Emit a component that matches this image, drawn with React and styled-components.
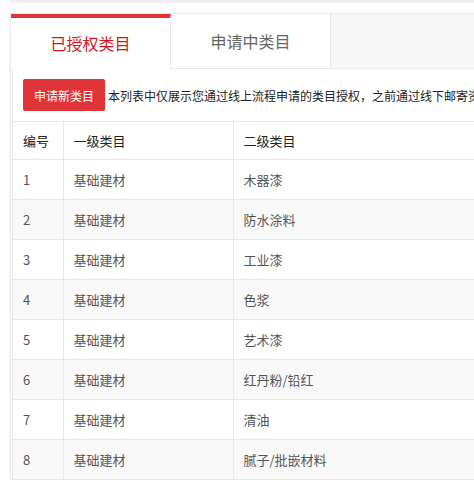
import React, { useState } from "react";
import styled, { createGlobalStyle } from "styled-components";

const GlobalStyle = createGlobalStyle`
  html, body {
    margin: 0;
    padding: 0;
    background: #fff;
    overflow: hidden;
    font-family: "Noto Sans CJK SC", "Liberation Sans", sans-serif;
  }
`;

const rows = [
  ["1", "基础建材", "木器漆"],
  ["2", "基础建材", "防水涂料"],
  ["3", "基础建材", "工业漆"],
  ["4", "基础建材", "色浆"],
  ["5", "基础建材", "艺术漆"],
  ["6", "基础建材", "红丹粉/铅红"],
  ["7", "基础建材", "清油"],
  ["8", "基础建材", "腻子/批嵌材料"],
];

function App() {
  const [tab, settab] = useState(0);
  return (
    <>
      <GlobalStyle />
      <Page>
        <TopStrip />
        <Box>
          <TabBar>
            <Tab active={tab === 0} onClick={() => settab(0)}>
              已授权类目
            </Tab>
            <Tab active={tab === 1} onClick={() => settab(1)}>
              申请中类目
            </Tab>
          </TabBar>
          <Panel>
            <Toolbar>
              <Button>申请新类目</Button>
              <Notice>
                本列表中仅展示您通过线上流程申请的类目授权，之前通过线下邮寄资质获得的类目授权不在此列表中展示
              </Notice>
            </Toolbar>
            <Table>
              <thead>
                <tr>
                  <Th width="50px">编号</Th>
                  <Th width="170px">一级类目</Th>
                  <Th width="400px">二级类目</Th>
                </tr>
              </thead>
              <tbody>
                {rows.map((row, i) => (
                  <Tr key={row[0]} striped={i % 2 === 1}>
                    <Td>{row[0]}</Td>
                    <Td>{row[1]}</Td>
                    <Td>{row[2]}</Td>
                  </Tr>
                ))}
              </tbody>
            </Table>
          </Panel>
        </Box>
      </Page>
    </>
  );
}
export default App;

const Page = styled.div`
  padding-left: 10px;
  width: 700px;
`;
const TopStrip = styled.div`
  height: 3px;
  background: #f0f0f0;
  margin-bottom: 10px;
`;
const Box = styled.div`
  border-top: 1px solid #e8e8e8;
  border-left: 1px solid #ececec;
  box-shadow: -1px 0 1px rgba(0, 0, 0, 0.04);
`;
const TabBar = styled.div`
  display: flex;
  height: 54px;
  background: #f7f7f7;
  border-bottom: 1px solid #e8e8e8;
`;
const Tab = styled.div`
  width: 160px;
  box-sizing: border-box;
  display: flex;
  align-items: center;
  justify-content: center;
  font-size: 16px;
  cursor: pointer;
  background: #fff;
  border-right: 1px solid #e8e8e8;
  border-top: ${(p) => (p.active ? "4px solid #e03538" : "none")};
  margin-bottom: ${(p) => (p.active ? "-1px" : "0")};
  height: ${(p) => (p.active ? "55px" : "54px")};
  padding-bottom: ${(p) => (p.active ? "1px" : "0")};
  color: ${(p) => (p.active ? "#d2141c" : "#666")};
`;
const Panel = styled.div`
  margin-left: 1px;
  border-left: 1px solid #e8e8e8;
  padding-top: 10px;
`;
const Toolbar = styled.div`
  display: flex;
  align-items: center;
  padding-left: 10px;
  margin-bottom: 10px;
`;
const Button = styled.button`
  flex: none;
  height: 32px;
  width: 82px;
  padding: 0;
  border: none;
  border-radius: 2px;
  background: #e03538;
  color: #fff;
  font-family: inherit;
  font-size: 12px;
  cursor: pointer;
`;
const Notice = styled.span`
  margin-left: 3px;
  font-size: 12px;
  color: #222;
  white-space: nowrap;
`;
const Table = styled.table`
  border-collapse: collapse;
  width: 620px;
  table-layout: fixed;
  font-size: 13px;
  border-top: 1px solid #e8e8e8;
`;
const Th = styled.th`
  box-sizing: border-box;
  height: 38px;
  padding: 0 10px;
  text-align: left;
  font-weight: 400;
  color: #222;
  border-right: 1px solid #e8e8e8;
  border-bottom: 1px solid #e8e8e8;
`;
const Tr = styled.tr`
  background: ${(p) => (p.striped ? "#f9f9f9" : "#fff")};
`;
const Td = styled.td`
  height: 39px;
  padding: 0 10px;
  color: #555;
  border-right: 1px solid #e8e8e8;
  border-bottom: 1px solid #e8e8e8;
`;
